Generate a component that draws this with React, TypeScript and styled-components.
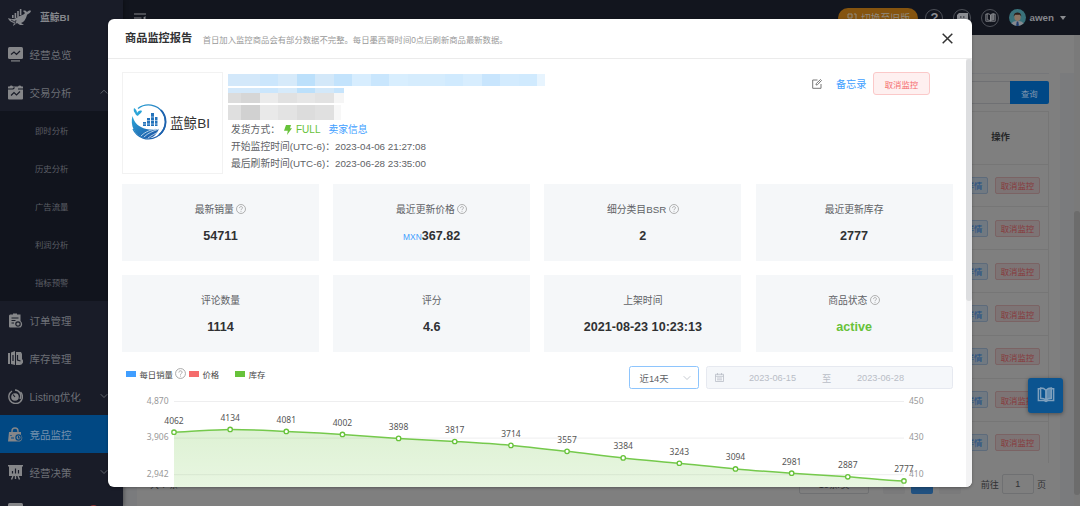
import React from "react";
import styled, { createGlobalStyle, css } from "styled-components";

const Global = createGlobalStyle`
  *, *::before, *::after { box-sizing: border-box; }
  body {
    margin: 0;
    overflow: hidden;
    font-family: "Liberation Sans", "Noto Sans CJK SC", sans-serif;
    font-size: 9.8px;
    color: #606266;
  }
`;

const Page = styled.div`
  position: relative;
  display: flex;
  width: 1080px;
  height: 506px;
  overflow: hidden;
  background: #7f7f7f;
`;

/* ---------- sidebar ---------- */

const Sidebar = styled.aside`
  display: flex;
  flex-direction: column;
  flex: none;
  width: 123px;
  height: 506px;
  overflow: hidden;
  background: #191c28;
  box-shadow: 1px 0 4px rgba(0, 0, 0, 0.35);
  z-index: 1;
`;

const Brand = styled.div`
  display: flex;
  align-items: center;
  flex: none;
  gap: 8px;
  height: 35px;
  padding: 0 0 1px 8px;
  font-size: 9.8px;
  font-weight: 700;
  color: #85878c;
`;

const MenuItem = styled.div<{ $active?: boolean }>`
  display: flex;
  align-items: center;
  flex: none;
  height: 38px;
  padding: 0 15px 0 8px;
  font-size: 10.5px;
  color: ${(p) => (p.$active ? "#7591ad" : "#6c6f76")};
  background: ${(p) => (p.$active ? "#014883" : "transparent")};
  svg:first-child { margin-right: 6.5px; }
`;

const MenuLabel = styled.span`
  flex: 1;
  white-space: nowrap;
`;

const MenuBadge = styled.span`
  width: 11px;
  height: 11px;
  margin-right: 9px;
  border-radius: 50%;
  background: #8c3434;
`;

const SubMenu = styled.div`
  flex: none;
  background: #11141d;
`;

const SubItem = styled.div`
  display: flex;
  align-items: center;
  height: 38px;
  padding-left: 35px;
  font-size: 8.4px;
  color: #5b5e65;
`;

/* ---------- top bar and page behind the dialog ---------- */

const Main = styled.div`
  display: flex;
  flex-direction: column;
  flex: 1;
  min-width: 0;
`;

const TopBar = styled.header`
  display: flex;
  align-items: center;
  flex: none;
  height: 35px;
  padding: 0 14px 0 11px;
  background: #12151e;
`;

const Spacer = styled.div`
  flex: 1;
`;

const SwitchPill = styled.div`
  display: flex;
  align-items: center;
  justify-content: center;
  gap: 4px;
  width: 80px;
  height: 20px;
  margin-right: 7px;
  border-radius: 10px;
  font-size: 9.8px;
  color: #8f8a80;
  background: #85540f;
  white-space: nowrap;
`;

const RoundButton = styled.div`
  display: flex;
  align-items: center;
  justify-content: center;
  width: 18px;
  height: 18px;
  margin-right: 10px;
  border: 1px solid #4d5058;
  border-radius: 50%;
  font-size: 13px;
  font-weight: 700;
  color: #8b8d92;
`;

const UserName = styled.span`
  margin: 0 6px 0 3px;
  font-size: 9.8px;
  font-weight: 700;
  color: #85878d;
`;

const Caret = styled.i`
  border: 3px solid transparent;
  border-top: 4px solid #8a8c90;
  border-bottom: 0;
`;

const Workspace = styled.div`
  display: flex;
  flex: 1;
  min-height: 0;
`;

const Gutter = styled.div<{ $width: number }>`
  flex: none;
  width: ${(p) => p.$width}px;
  margin-top: 38px;
  background: #7a7b7d;
`;

const Panel = styled.section`
  display: flex;
  flex-direction: column;
  flex: 1;
  padding: 38px 11px 0 13px;
`;

const SearchRow = styled.div`
  display: flex;
  justify-content: flex-end;
  flex: none;
  height: 38px;
  padding-top: 7px;
  border-top: 1px solid #76777a;
`;

const SearchInput = styled.div`
  width: 200px;
  height: 23px;
  border: 1px solid #6f7073;
  border-right: 0;
`;

const SearchButton = styled.div`
  display: flex;
  align-items: center;
  justify-content: center;
  width: 39.5px;
  height: 23px;
  border-radius: 0 2px 2px 0;
  font-size: 8.4px;
  color: #7f97ae;
  background: #004886;
`;

const Table = styled.div`
  flex: none;
  border: 1px solid #767676;
  border-bottom: 0;
`;

const TableHead = styled.div`
  display: flex;
  align-items: center;
  justify-content: flex-end;
  height: 52.5px;
  padding: 0 38px 3px 0;
  border-bottom: 1px solid #767676;
  font-weight: 700;
  font-size: 9.4px;
  color: #262729;
`;

const TableRow = styled.div`
  display: flex;
  align-items: center;
  justify-content: flex-end;
  gap: 7px;
  height: 42.85px;
  padding-right: 8px;
  border-bottom: 1px solid #767676;
  &:last-child { height: 41px; border-bottom: 0; }
`;

const Tag = styled.span<{ $danger?: boolean }>`
  display: flex;
  align-items: center;
  justify-content: center;
  width: ${(p) => (p.$danger ? 45 : 28)}px;
  height: 17px;
  border: 1px solid ${(p) => (p.$danger ? "#7b6364" : "#5d6b7b")};
  border-radius: 2px;
  font-size: 8.4px;
  color: ${(p) => (p.$danger ? "#873a3c" : "#1f5083")};
  background: ${(p) => (p.$danger ? "#7d7475" : "#717981")};
`;

const Pager = styled.div`
  display: flex;
  align-items: center;
  flex: none;
  height: 22px;
  margin-top: 10.5px;
  padding-right: 3px;
  color: #303133;
  font-size: 9.1px;
`;

const PagerBox = styled.span<{ $width: number; $gap: number; $kind?: "page" | "current" }>`
  display: flex;
  align-items: center;
  justify-content: center;
  width: ${(p) => p.$width}px;
  height: 20.5px;
  margin-right: ${(p) => p.$gap}px;
  border-radius: 2px;
  ${(p) =>
    p.$kind === "current"
      ? css`background: #215180;`
      : p.$kind === "page"
      ? css`background: #7a7a7b;`
      : css`border: 1px solid #6f7072;`}
`;

const JumpLabel = styled.span`
  margin-right: 3px;
`;

const ScrollRail = styled.div`
  flex: none;
  width: 6px;
  background: #7a7a7a;
`;

const ScrollThumb = styled.div`
  height: 284px;
  margin-top: 176px;
  border-radius: 3px;
  background: #6c6c6c;
`;

const FloatingButton = styled.div`
  position: absolute;
  left: 1028px;
  top: 377.5px;
  display: flex;
  align-items: center;
  justify-content: center;
  width: 35px;
  height: 35px;
  border-radius: 3px;
  background: #0b5490;
  box-shadow: 0 1px 4px rgba(0, 0, 0, 0.4);
  z-index: 2;
`;

/* ---------- dialog ---------- */

const Dialog = styled.div`
  position: absolute;
  left: 108px;
  top: 19px;
  display: flex;
  flex-direction: column;
  width: 864px;
  height: 468px;
  border-radius: 6px;
  overflow: hidden;
  background: #fff;
  box-shadow: 0 1px 3px rgba(0, 0, 0, 0.3);
  z-index: 3;
`;

const DialogHead = styled.div`
  display: flex;
  align-items: center;
  flex: none;
  height: 40px;
  padding: 0 19px 0 17px;
  border-bottom: 1px solid #ebebeb;
`;

const DialogTitle = styled.h1`
  margin: 0 10.5px 0 0;
  font-size: 11.2px;
  line-height: 18px;
  padding-bottom: 1px;
  font-weight: 700;
  color: #303133;
`;

const DialogNote = styled.span`
  flex: 1;
  font-size: 8.35px;
  color: #999;
`;

const DialogBody = styled.div`
  display: flex;
  flex: 1;
  min-height: 0;
`;

const DialogContent = styled.div`
  flex: 1;
  min-width: 0;
  padding: 13px 13.5px 0 14px;
  overflow: hidden;
`;

const DialogRail = styled.div`
  flex: none;
  width: 6px;
  background: #f3f3f4;
`;

const DialogThumb = styled.div`
  height: 242px;
  border-radius: 3px;
  background: #dddee0;
`;

const Product = styled.div`
  display: flex;
  height: 102px;
`;

const ProductImage = styled.div`
  display: flex;
  align-items: center;
  flex: none;
  width: 101px;
  height: 102px;
  padding: 0 0 2px 7px;
  border: 1px solid #f2f2f2;
  font-size: 13.6px;
  color: #333;
  white-space: nowrap;
  svg { flex: none; margin-right: 3px; }
`;

const ProductInfo = styled.div`
  flex: 1;
  padding: 2px 0 0 5px;
`;

const MosaicRow = styled.div<{ $height: number; $gap: number }>`
  display: flex;
  height: ${(p) => p.$height}px;
  margin-bottom: ${(p) => p.$gap}px;
`;

const MosaicCell = styled.i<{ $width: number; $color: string }>`
  width: ${(p) => p.$width}px;
  background: ${(p) => p.$color};
`;

const InfoLine = styled.div`
  display: flex;
  align-items: center;
  height: 17px;
  padding-left: 3px;
  white-space: nowrap;
`;

const Full = styled.span`
  display: flex;
  align-items: center;
  gap: 4px;
  margin: 2px 8px 0 4px;
  font-size: 10px;
  color: #67c23a;
`;

const Link = styled.span`
  color: #409eff;
`;

const Actions = styled.div`
  display: flex;
  align-items: center;
  height: 23px;
  margin-right: 22.5px;
  ${Link} { margin: 0 6.5px 0 14px; font-size: 10.2px; }
`;

const CancelButton = styled.button`
  width: 57px;
  height: 23px;
  padding: 0;
  border: 1px solid #fbc9c9;
  border-radius: 3px;
  font: inherit;
  font-size: 8.4px;
  color: #f56c6c;
  background: #fef0f0;
`;

const Stats = styled.div`
  display: grid;
  grid-template-columns: repeat(4, 197px);
  grid-auto-rows: 77px;
  gap: 14px 14.2px;
  margin-top: 10px;
`;

const Stat = styled.div`
  display: flex;
  flex-direction: column;
  align-items: center;
  padding-top: 17px;
  background: #f5f7f9;
`;

const StatLabel = styled.div`
  display: flex;
  align-items: center;
  gap: 2.5px;
  height: 16px;
`;

const StatValue = styled.div<{ $ok?: boolean }>`
  display: flex;
  align-items: baseline;
  margin-top: 11px;
  font-size: 12.6px;
  line-height: 17px;
  font-weight: 700;
  color: ${(p) => (p.$ok ? "#67c23a" : "#303133")};
`;

const Currency = styled.span`
  font-size: 8.4px;
  font-weight: 400;
  color: #409eff;
`;

const ChartBar = styled.div`
  display: flex;
  align-items: flex-start;
  height: 23px;
  margin: 14px 0 3px;
`;

const Legend = styled.div`
  display: flex;
  padding-left: 3.5px;
`;

const LegendItem = styled.div<{ $gap: number }>`
  display: flex;
  align-items: center;
  height: 15px;
  margin-right: ${(p) => p.$gap}px;
  font-size: 8.4px;
  color: #444;
  svg { margin-left: 2px; }
`;

const Swatch = styled.i<{ $color: string }>`
  width: 10.5px;
  height: 6px;
  margin: 1px 3.5px 0 0;
  background: ${(p) => p.$color};
`;

const RangeSelect = styled.div`
  display: flex;
  align-items: center;
  justify-content: space-between;
  width: 70.5px;
  height: 23px;
  margin-right: 6.5px;
  padding: 0 7px 0 10px;
  border: 1px solid #8ec5fd;
  border-radius: 2.5px;
  font-size: 9.4px;
`;

const DateRange = styled.div`
  display: flex;
  align-items: center;
  width: 247px;
  height: 23px;
  padding-left: 8px;
  border: 1px solid #e6e9f0;
  border-radius: 2.5px;
  font-size: 9.2px;
  color: #b9bdc6;
  background: #f5f7fa;
`;

const DateText = styled.span<{ $width: number }>`
  width: ${(p) => p.$width}px;
  text-align: center;
`;

const ChartSvg = styled.svg`
  display: block;
  font-family: "Noto Sans", sans-serif;
  font-size: 8.5px;
`;

/* ---------- icons ---------- */

const Help = ({ size = 10 }: { size?: number }) => (
  <svg width={size} height={size} viewBox="0 0 20 20" fill="none" stroke="#999" strokeWidth="1.5">
    <circle cx="10" cy="10" r="9" />
    <path d="M7 8.2c0-4 6-4 6-.4 0 2-3 2-3 4.4M10 13.8v1.8" />
  </svg>
);

const Chevron = ({ up, color = "#686b72" }: { up?: boolean; color?: string }) => (
  <svg width="8" height="8" viewBox="0 0 8 8" fill="none" stroke={color} strokeWidth="0.9">
    <path d={up ? "M.7 5.500 4 2.200l3.300 3.300" : "M.7 2.200l3.300 3.300 3.300-3.300"} />
  </svg>
);

type IconName = "monitor" | "trend" | "order" | "stock" | "target" | "bag" | "board";

const glyphs: Record<IconName, React.ReactNode> = {
  monitor: (
    <>
      <rect x="0" y="0" width="15" height="12" rx="1.5" />
      <path d="M3 13.300h9v1.200H3z" />
      <path d="M3 7.500 6 5l2.500 2.500L12 4" className="cut" />
    </>
  ),
  trend: (
    <>
      <path d="M0 1.500h1.500a2 2 0 0 1 3.500 0h5a2 2 0 0 1 3.500 0H15v12a1 1 0 0 1-1 1H1a1 1 0 0 1-1-1z" />
      <path d="M3 10.500 6 7.500l2.500 2.500L12 6.500M0 4h5l1.500-1.500M15 4h-5" className="cut" />
    </>
  ),
  order: (
    <>
      <path d="M2 1.500h3V.5h4v1h3.500V8a4 4 0 0 1 0 6.500H2a1 1 0 0 1-1-1v-11z" />
      <path d="M3.500 5h7M3.500 7.500h4M3.500 10h2.500" className="cut" />
      <circle cx="10" cy="11" r="2.200" className="cut" />
    </>
  ),
  stock: (
    <>
      <path d="M0 2h2v11H0zM3 1.500 7 0v14l-4-1zM8 1h5l1 2v5a3.500 3.500 0 0 1-3 6H8z" />
      <path d="M5 4v6M9.500 4v5l3 1" className="cut" />
    </>
  ),
  target: (
    <>
      <path d="M4 2a6.800 6.800 0 1 0 8.500 1" className="line" />
      <path d="M7 1a6 6 0 0 1 5 9" className="line" />
      <circle cx="7" cy="8" r="3.800" />
      <path d="M7 8 5 5.500" className="cut" />
    </>
  ),
  bag: (
    <>
      <path d="M4 6V4a3 3 0 0 1 6 0v2" className="line" />
      <path d="M1 5h12v3a4 4 0 0 1-1 6.500H0z" />
      <circle cx="10.500" cy="10.500" r="2.600" className="cut" />
      <path d="M3 8v1M3 11h3M10.500 9v2h1.500" className="cut" />
    </>
  ),
  board: (
    <>
      <path d="M0 0h15v1.500h-1V11H1V1.500H0z" />
      <path d="M5 11l-1.500 3.500M10 11l1.500 3.500M7.500 11v3" className="line" />
      <path d="M4.500 8.500V6M7.500 8.500V3.500M10.500 8.500V5" className="cut" />
    </>
  ),
};

const Glyph = styled.svg<{ $cut: string }>`
  flex: none;
  fill: #858689;
  .cut { fill: none; stroke: ${(p) => p.$cut}; stroke-width: 1.2; }
  .line { fill: none; stroke: #858689; stroke-width: 1.4; }
`;

const MenuIcon = ({ name, active }: { name: IconName; active?: boolean }) => (
  <Glyph width="15" height="15" viewBox="0 0 15 15" $cut={active ? "#014883" : "#191c28"}>
    {glyphs[name]}
  </Glyph>
);

const WhaleMark = () => (
  <svg width="24" height="17" viewBox="0 0 24 17" fill="#85878c">
    <path d="M0 9c4 2 7 1 10-1s6-2 7-4l-2-2c2-1 3 0 4 1 1-1 3-2 4-1-1 3-4 3-4 4-1 4-3 7-6 8l3 2h-4l-3-2-4 3 1-3C3 13 1 12 0 9z" />
    <path d="M4 6h1.600v3H4zM6.600 4h1.600v5H6.600zM9.200 2h1.600v6H9.200zM11.800 0h1.600v6h-1.600z" />
    <path d="M3 11l4 2M8 11l-1 4" stroke="#191c28" strokeWidth=".8" />
  </svg>
);

const ProductLogo = () => (
  <svg width="37" height="38" viewBox="0 0 37 38">
    <defs>
      <linearGradient id="ring" x1="0" y1="0" x2="1" y2="1">
        <stop offset="0" stopColor="#2ba5d8" />
        <stop offset="1" stopColor="#1d50a2" />
      </linearGradient>
    </defs>
    <path d="M8 5.500A17 17 0 1 1 3 26" fill="none" stroke="url(#ring)" strokeWidth="1.300" />
    <path d="M31 7a17 17 0 0 1-2 25" fill="none" stroke="#1d62ae" strokeWidth="1.800" />
    <path d="M2.500 13C0 22 4 32 14 35c7 1.500 12-2 15-9-6 1-13 1-18-2-5-2.500-7-6-8.500-11z" fill="url(#ring)" />
    <path d="M14 34c4-4 9-6 15-8M11 33c5-5 10-6 15-7M18 35c4-3 7-4 10-6" fill="none" stroke="#d7e8f5" strokeWidth=".8" />
    <path d="M6 12C5 9 3 9 4 5c2 1 3 3 3 5 1-2 3-3 5-2-1 3-3 3-4 5z" fill="#2ba5d8" />
    <g fill="#2473bb">
      <path d="M13 19h3v4h-3zM17 15h3v8h-3zM21 10h3v13h-3zM25 14h2.500v9H25z" />
    </g>
    <path d="M13 21h15M17 17.500h11M21 14h4" stroke="#fff" strokeWidth=".5" />
  </svg>
);

const Book = ({ size, color }: { size: number; color: string }) => (
  <svg width={size} height={size * 0.85} viewBox="0 0 20 17" fill="none" stroke={color} strokeWidth="1.600">
    <path d="M4 2H1.500v13H8l2 1 2-1h6.500V2H16" />
    <path d="M10 3.500C8.500 2 6.500 1.200 4 1.200v11.300c2.500 0 4.500.5 6 2z" />
    <path d="M10 3.500c1.500-1.500 3.500-2.300 6-2.300v11.300c-2.500 0-4.500.5-6 2z" fill={color} fillOpacity=".75" />
  </svg>
);

const Avatar = () => (
  <svg width="17" height="17" viewBox="0 0 17 17">
    <defs>
      <clipPath id="face"><circle cx="8.500" cy="8.500" r="8.500" /></clipPath>
    </defs>
    <g clipPath="url(#face)">
      <rect width="17" height="17" fill="#39717a" />
      <path d="M2 17c0-4 3-5 6.500-5s6.500 1 6.500 5z" fill="#85898f" />
      <path d="M7.800 12.500h1.500L10 17H7z" fill="#1d3a6c" />
      <ellipse cx="8.500" cy="8" rx="3.200" ry="4" fill="#8b7462" />
      <path d="M4.800 7.500C4 2 13 2 12.200 7.500L11 5.800H6z" fill="#2c1d18" />
    </g>
  </svg>
);

/* ---------- data ---------- */

const subItems = ["即时分析", "历史分析", "广告流量", "利润分析", "指标预警"];

const lowerMenu: { label: string; icon: IconName; active?: boolean; chevron?: boolean; badge?: boolean }[] = [
  { label: "订单管理", icon: "order" },
  { label: "库存管理", icon: "stock" },
  { label: "Listing优化", icon: "target", chevron: true },
  { label: "竞品监控", icon: "bag", active: true },
  { label: "经营决策", icon: "board", chevron: true },
  { label: "物料管理", icon: "monitor", badge: true },
];

const stats = [
  { label: "最新销量", value: "54711", help: true },
  { label: "最近更新价格", value: "367.82", help: true, currency: "MXN" },
  { label: "细分类目BSR", value: "2", help: true },
  { label: "最近更新库存", value: "2777" },
  { label: "评论数量", value: "1114" },
  { label: "评分", value: "4.6" },
  { label: "上架时间", value: "2021-08-23 10:23:13" },
  { label: "商品状态", value: "active", help: true, ok: true },
];

const titleMosaic = ["#d3e8fa", "#d3e8fa", "#cbe6fc", "#d6eafa", "#bce0fb", "#d3e8f9", "#c3e3fc", "#d7edfe", "#c9e6fd", "#d8eefe", "#d5ecfd", "#d5ecfd", "#d0eafe", "#d7edfe", "#c8e5fd", "#d3ebfe", "#d0eafe"];
const greyMosaic = ["#dcdcdc", "#d6d6d6", "#ebebeb", "#e1e1e1", "#e6e6e6", "#e2e2e2"];
const greyMosaicLow = ["#dfdfdf", "#d1d1d1", "#e9e9e9", "#e3e3e3", "#dcdcdc", "#e0e0e0"];
const cellWidths = [13, 18.5, 18.5, 18.5, 18.5, 18.5];

const stock = [4062, 4134, 4081, 4002, 3898, 3817, 3714, 3557, 3384, 3243, 3094, 2981, 2887, 2777];
const toY = (v: number) => 9.5 + ((4870 - v) * 36.6) / 964;
const toX = (i: number) => 52 + i * 56.15;

const StockChart = () => {
  const points = stock.map((v, i) => [toX(i), toY(v)]);
  const line = points.reduce((d, [x, y], i) => {
    if (i === 0) return `M${x} ${y}`;
    const [px, py] = points[i - 1];
    const before = points[Math.max(i - 2, 0)][1];
    const after = points[Math.min(i + 1, points.length - 1)][1];
    return `${d}C${px + 18.7} ${py + (y - before) / 6} ${x - 18.7} ${y - (after - py) / 6} ${x} ${y}`;
  }, "");
  return (
    <ChartSvg width="830" height="120" viewBox="0 0 830 120">
      <defs>
        <linearGradient id="area" x1="0" y1="0" x2="0" y2="1">
          <stop offset="0" stopColor="#67c23a" stopOpacity=".22" />
          <stop offset="1" stopColor="#67c23a" stopOpacity=".12" />
        </linearGradient>
      </defs>
      {["4,870", "3,906", "2,942"].map((label, i) => (
        <g key={label}>
          <line x1="52" x2="782" y1={9.5 + i * 36.6} y2={9.5 + i * 36.6} stroke="#eeeeef" />
          <text x="46.5" y={11.7 + i * 36.6} textAnchor="end" fill="#999">{label}</text>
          <text x="787" y={11.7 + i * 36.6} fill="#999">{450 - i * 20}</text>
        </g>
      ))}
      <path d={`${line}V120H52Z`} fill="url(#area)" />
      <path d={line} fill="none" stroke="#75c94c" strokeWidth="1.5" />
      {points.map(([x, y], i) => (
        <g key={stock[i]}>
          <circle cx={x} cy={y} r="2.2" fill="#fff" stroke="#67c23a" strokeWidth="1.3" />
          <text x={x} y={y - 8.5} textAnchor="middle" fill="#555">{stock[i]}</text>
        </g>
      ))}
    </ChartSvg>
  );
};

export default function App() {
  return (
    <Page>
      <Global />
      <Sidebar>
        <Brand><WhaleMark />蓝鲸BI</Brand>
        <MenuItem><MenuIcon name="monitor" /><MenuLabel>经营总览</MenuLabel></MenuItem>
        <MenuItem><MenuIcon name="trend" /><MenuLabel>交易分析</MenuLabel><Chevron up /></MenuItem>
        <SubMenu>
          {subItems.map((label) => <SubItem key={label}>{label}</SubItem>)}
        </SubMenu>
        {lowerMenu.map((item) => (
          <MenuItem key={item.label} $active={item.active}>
            <MenuIcon name={item.icon} active={item.active} />
            <MenuLabel>{item.label}</MenuLabel>
            {item.chevron && <Chevron />}
            {item.badge && <MenuBadge />}
          </MenuItem>
        ))}
      </Sidebar>

      <Main>
        <TopBar>
          <svg width="12" height="10" viewBox="0 0 12 10" fill="none" stroke="#85878c" strokeWidth="1.2">
            <path d="M0 1h12M0 5h7.500M0 9h12" />
            <path d="M11.500 3v4L9 5z" fill="#85878c" stroke="none" />
          </svg>
          <Spacer />
          <SwitchPill>
            <svg width="10" height="10" viewBox="0 0 10 10" fill="none" stroke="#8f8a80"><path d="M1 1h4v4H1zM7 1h2v5M1 8v1h4M7 9h2" /></svg>
            切换至旧版
          </SwitchPill>
          <RoundButton>?</RoundButton>
          <RoundButton>
            <svg width="11" height="10" viewBox="0 0 11 10"><path d="M2 0h9v8H8l-2 2H0V2z" fill="#8b8d92" /><path d="M3 4h1.500M6 4h1.500" stroke="#12151e" /></svg>
          </RoundButton>
          <RoundButton><Book size={11} color="#8b8d92" /></RoundButton>
          <Avatar />
          <UserName>awen</UserName>
          <Caret />
        </TopBar>
        <Workspace>
          <Gutter $width={14} />
          <Panel>
            <SearchRow><SearchInput /><SearchButton>查询</SearchButton></SearchRow>
            <Table>
              <TableHead>操作</TableHead>
              {[0, 1, 2, 3, 4, 5, 6].map((row) => (
                <TableRow key={row}><Tag>详情</Tag><Tag $danger>取消监控</Tag></TableRow>
              ))}
            </Table>
            <Pager>
              <span>共 7 条</span>
              <Spacer />
              <PagerBox $width={70} $gap={14}>10条/页</PagerBox>
              <PagerBox $width={21.5} $gap={6.5} $kind="page" />
              <PagerBox $width={21.5} $gap={6.5} $kind="current" />
              <PagerBox $width={21.5} $gap={20} $kind="page" />
              <JumpLabel>前往</JumpLabel>
              <PagerBox $width={32} $gap={3}>1</PagerBox>
              <span>页</span>
            </Pager>
          </Panel>
          <Gutter $width={14} />
          <ScrollRail><ScrollThumb /></ScrollRail>
        </Workspace>
      </Main>

      <FloatingButton><Book size={18} color="#7fa0bd" /></FloatingButton>

      <Dialog role="dialog">
        <DialogHead>
          <DialogTitle>商品监控报告</DialogTitle>
          <DialogNote>首日加入监控商品会有部分数据不完整。每日墨西哥时间0点后刷新商品最新数据。</DialogNote>
          <svg width="11" height="11" viewBox="0 0 11 11" stroke="#333" strokeWidth="1.5"><path d="M.7.7l9.600 9.600M10.300.7.7 10.300" /></svg>
        </DialogHead>
        <DialogBody>
          <DialogContent>
            <Product>
              <ProductImage><ProductLogo />蓝鲸BI</ProductImage>
              <ProductInfo>
                <MosaicRow $height={12} $gap={2}>
                  {titleMosaic.map((color, i) => <MosaicCell key={i} $color={color} $width={i === 0 ? 13 : 18.5} />)}
                  <MosaicCell $color="#e7f4fe" $width={8} />
                </MosaicRow>
                <MosaicRow $height={5} $gap={0}>
                  {cellWidths.map((width, i) => <MosaicCell key={i} $color={titleMosaic[i]} $width={width} />)}
                  <MosaicCell $color="#c6e4fc" $width={10} />
                </MosaicRow>
                <MosaicRow $height={10} $gap={2}>
                  {cellWidths.map((width, i) => <MosaicCell key={i} $color={greyMosaic[i]} $width={width} />)}
                  <MosaicCell $color="#f5f5f5" $width={10} />
                </MosaicRow>
                <MosaicRow $height={15} $gap={0}>
                  {cellWidths.map((width, i) => <MosaicCell key={i} $color={greyMosaicLow[i]} $width={width} />)}
                  <MosaicCell $color="#f7f7f7" $width={7} />
                </MosaicRow>
                <InfoLine>
                  发货方式：
                  <Full>
                    <svg width="8" height="10" viewBox="0 0 8 10" fill="#67c23a"><path d="M2 0h5L6 3.300h2L3 10l.8-4.300H0z" /></svg>
                    FULL
                  </Full>
                  <Link>卖家信息</Link>
                </InfoLine>
                <InfoLine>开始监控时间(UTC-6)：2023-04-06 21:27:08</InfoLine>
                <InfoLine>最后刷新时间(UTC-6)：2023-06-28 23:35:00</InfoLine>
              </ProductInfo>
              <Actions>
                <svg width="10" height="10" viewBox="0 0 10 10" fill="none" stroke="#777" strokeWidth="1"><path d="M5.500 1H.7v8.300H9V5M4 6l.3-1.500L8.500.5l1 1-4 4.200z" /></svg>
                <Link>备忘录</Link>
                <CancelButton>取消监控</CancelButton>
              </Actions>
            </Product>

            <Stats>
              {stats.map((s) => (
                <Stat key={s.label}>
                  <StatLabel>{s.label}{s.help && <Help />}</StatLabel>
                  <StatValue $ok={s.ok}>
                    {s.currency && <Currency>{s.currency}</Currency>}
                    {s.value}
                  </StatValue>
                </Stat>
              ))}
            </Stats>

            <ChartBar>
              <Legend>
                <LegendItem $gap={2.5}><Swatch $color="#409eff" />每日销量<Help size={11} /></LegendItem>
                <LegendItem $gap={15.5}><Swatch $color="#f56c6c" />价格</LegendItem>
                <LegendItem $gap={0}><Swatch $color="#67c23a" />库存</LegendItem>
              </Legend>
              <Spacer />
              <RangeSelect>近14天<Chevron color="#c0c4cc" /></RangeSelect>
              <DateRange>
                <svg width="9" height="9" viewBox="0 0 9 9" fill="none" stroke="#b9bdc6" strokeWidth=".8"><path d="M.5 1.300h8v7.200h-8zM.5 3.300h8M2.500 0v2M6.500 0v2M2 5h5M2 6.800h5" /></svg>
                <DateText $width={98}>2023-06-15</DateText>
                <DateText $width={10}>至</DateText>
                <DateText $width={98}>2023-06-28</DateText>
              </DateRange>
            </ChartBar>
            <StockChart />
          </DialogContent>
          <DialogRail><DialogThumb /></DialogRail>
        </DialogBody>
      </Dialog>
    </Page>
  );
}
